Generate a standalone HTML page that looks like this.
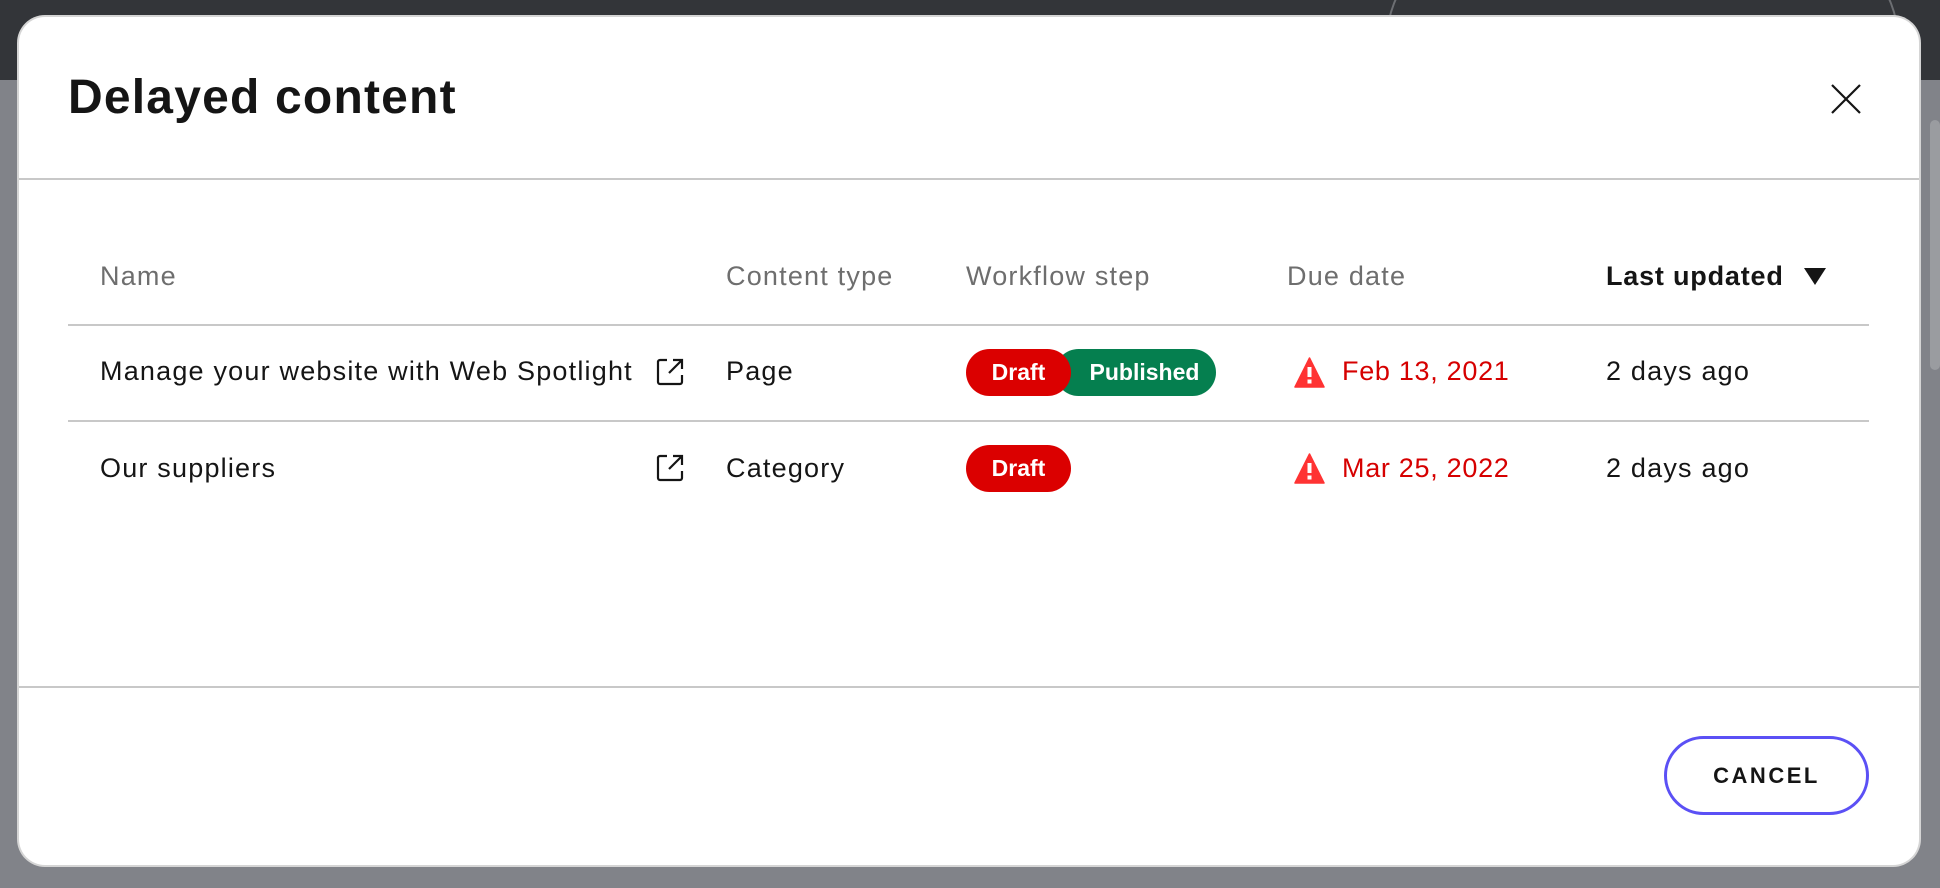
<!DOCTYPE html>
<html><head><meta charset="utf-8"><style>
*{margin:0;padding:0;box-sizing:border-box}
body{width:1940px;height:888px;overflow:hidden;position:relative;background:#818389;font-family:"Liberation Sans",sans-serif}
.top{position:absolute;left:0;top:0;width:1940px;height:80px;background:#333539}
.circ{position:absolute;left:1386px;top:-60px;width:513px;height:200px;border:2px solid #6c6e72;border-radius:100px}
.sb{position:absolute;left:1930px;top:120px;width:10px;height:250px;background:#9a9ca0;border-radius:5px}
.modal{position:absolute;left:19px;top:17px;width:1900px;height:848px;background:#fff;border-radius:26px;box-shadow:0 0 0 2px #d5d5d5}
.a{position:absolute;white-space:nowrap}
.hd{color:#6e6e6e;font-size:27px;top:261px;letter-spacing:1.2px}
.td{color:#151515;font-size:27px;letter-spacing:1.2px}
.line{position:absolute;height:2px;background:#c8c8c8}
.badge{position:absolute;height:47px;border-radius:24px;color:#fff;font-weight:bold;font-size:23px;line-height:47px;text-align:center}
.red{color:#d60000;font-size:27px;letter-spacing:0.7px}
</style></head><body>
<div class="top"></div>
<div class="circ"></div>
<div class="sb"></div>
<div class="modal"></div>
<div class="a" style="left:68px;top:70px;font-size:48px;font-weight:bold;color:#151515;letter-spacing:1.2px">Delayed content</div>
<svg class="a" style="left:1830px;top:83px" width="32" height="32" viewBox="0 0 32 32"><path d="M2 2L30 30M30 2L2 30" stroke="#151515" stroke-width="2.2"/></svg>
<div class="line" style="left:19px;top:178px;width:1900px"></div>

<div class="a hd" style="left:100px">Name</div>
<div class="a hd" style="left:726px">Content type</div>
<div class="a hd" style="left:966px">Workflow step</div>
<div class="a hd" style="left:1287px">Due date</div>
<div class="a hd" style="left:1606px;color:#151515;font-weight:bold;letter-spacing:0.8px">Last updated</div>
<svg class="a" style="left:1804px;top:268px" width="22" height="17" viewBox="0 0 22 17"><path d="M0 0H22L11 17Z" fill="#151515"/></svg>
<div class="line" style="left:68px;top:324px;width:1801px"></div>

<div class="a td" style="left:100px;top:356px">Manage your website with Web Spotlight</div>
<svg class="a" style="left:655px;top:357px" width="30" height="30" viewBox="0 0 30 30" fill="none" stroke="#151515" stroke-width="2.2"><path d="M12 3H5a2 2 0 0 0-2 2v20a2 2 0 0 0 2 2h20a2 2 0 0 0 2-2v-7M18 3h9v9M27 3L14 16"/></svg>
<div class="a td" style="left:726px;top:356px">Page</div>
<div class="badge" style="left:1055px;top:349px;width:161px;background:#057f4f;padding-left:18px">Published</div>
<div class="badge" style="left:966px;top:349px;width:105px;background:#db0000">Draft</div>
<svg class="a" style="left:1294px;top:357px" width="31" height="31" viewBox="0 0 31 31"><path d="M15.5 1L30 30H1Z" fill="#ff3333" stroke="#ff3333" stroke-width="1.5" stroke-linejoin="round"/><rect x="13.5" y="10" width="4" height="10" fill="#fff"/><rect x="13.5" y="22.5" width="4" height="4" fill="#fff"/></svg>
<div class="a red" style="left:1342px;top:356px">Feb 13, 2021</div>
<div class="a td" style="left:1606px;top:356px">2 days ago</div>
<div class="line" style="left:68px;top:420px;width:1801px"></div>

<div class="a td" style="left:100px;top:453px">Our suppliers</div>
<svg class="a" style="left:655px;top:453px" width="30" height="30" viewBox="0 0 30 30" fill="none" stroke="#151515" stroke-width="2.2"><path d="M12 3H5a2 2 0 0 0-2 2v20a2 2 0 0 0 2 2h20a2 2 0 0 0 2-2v-7M18 3h9v9M27 3L14 16"/></svg>
<div class="a td" style="left:726px;top:453px">Category</div>
<div class="badge" style="left:966px;top:445px;width:105px;background:#db0000">Draft</div>
<svg class="a" style="left:1294px;top:453px" width="31" height="31" viewBox="0 0 31 31"><path d="M15.5 1L30 30H1Z" fill="#ff3333" stroke="#ff3333" stroke-width="1.5" stroke-linejoin="round"/><rect x="13.5" y="10" width="4" height="10" fill="#fff"/><rect x="13.5" y="22.5" width="4" height="4" fill="#fff"/></svg>
<div class="a red" style="left:1342px;top:453px">Mar 25, 2022</div>
<div class="a td" style="left:1606px;top:453px">2 days ago</div>

<div class="line" style="left:19px;top:686px;width:1900px"></div>
<div class="a" style="left:1664px;top:736px;width:205px;height:79px;border:3px solid #5b50f5;border-radius:40px;text-align:center;line-height:73px;font-weight:bold;font-size:22px;letter-spacing:2.5px;color:#151515">CANCEL</div>
</body></html>
